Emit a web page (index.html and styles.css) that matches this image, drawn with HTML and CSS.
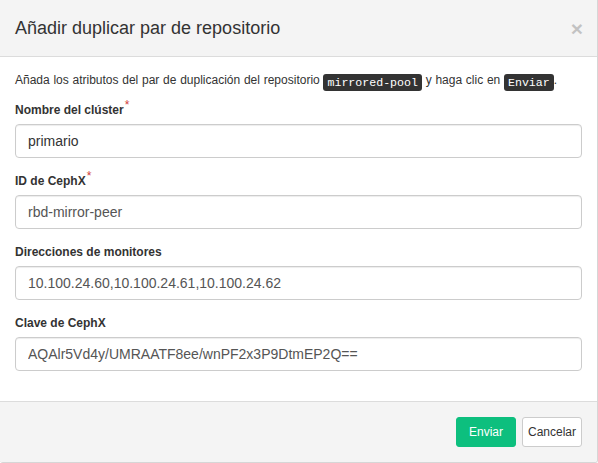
FILE: index.html
```html
<!DOCTYPE html>
<html lang="es">
<head>
<meta charset="utf-8">
<title>Añadir duplicar par de repositorio</title>
<link rel="stylesheet" href="styles.css">
</head>
<body>
<div class="modal">
  <div class="modal-header">
    <h4 class="modal-title">Añadir duplicar par de repositorio</h4>
    <button type="button" class="close" aria-label="Cerrar">×</button>
  </div>
  <form class="modal-body">
    <p class="intro">Añada los atributos del par de duplicación del repositorio <kbd>mirrored-pool</kbd> y haga clic en <kbd>Enviar</kbd>.</p>
    <div class="form-group">
      <label class="required">Nombre del clúster</label>
      <input class="form-control dark" type="text" value="primario">
    </div>
    <div class="form-group">
      <label class="required">ID de CephX</label>
      <input class="form-control" type="text" value="rbd-mirror-peer">
    </div>
    <div class="form-group">
      <label>Direcciones de monitores</label>
      <input class="form-control" type="text" value="10.100.24.60,10.100.24.61,10.100.24.62">
    </div>
    <div class="form-group">
      <label>Clave de CephX</label>
      <input class="form-control" type="text" value="AQAlr5Vd4y/UMRAATF8ee/wnPF2x3P9DtmEP2Q==">
    </div>
  </form>
  <div class="modal-footer">
    <button type="button" class="btn btn-primary">Enviar</button>
    <button type="button" class="btn btn-default">Cancelar</button>
  </div>
</div>
</body>
</html>
```
FILE: styles.css
```css
* { box-sizing: border-box; }
html, body { margin: 0; padding: 0; background: #fff; }
body {
  font-family: "Liberation Sans", Arial, Helvetica, sans-serif;
  font-size: 12px;
  line-height: 1.42857;
  color: #333;
}
.modal {
  width: 598px;
  height: 463px;
  display: flex;
  flex-direction: column;
  border-right: 1px solid #d6d6d6;
  border-bottom: 1px solid #d6d6d6;
  border-radius: 0 0 3px 3px;
  overflow: hidden;
}
.modal-header {
  background: #f4f4f4;
  border-bottom: 1px solid #dcdcdc;
  padding: 15px;
  display: flex;
  align-items: center;
  justify-content: space-between;
}
.modal-title {
  margin: 0;
  font-size: 18px;
  font-weight: normal;
  line-height: 26px;
  color: #333;
}
.close {
  background: none;
  border: 0;
  padding: 0;
  margin: 0 -1px 0 0;
  font-family: "Liberation Sans", Arial, sans-serif;
  font-size: 21px;
  font-weight: bold;
  line-height: 1;
  color: #000;
  opacity: .2;
  cursor: pointer;
}
.modal-body {
  margin: 0;
  padding: 15px;
  flex: 1;
}
.intro {
  margin: 0 0 11px;
  line-height: 17px;
  word-spacing: 0.4px;
}
kbd {
  display: inline-block;
  font-family: "Liberation Mono", "Courier New", monospace;
  font-size: 11.6px;
  line-height: 13px;
  padding: 2px 4px;
  color: #fff;
  background: #333;
  border-radius: 3px;
  vertical-align: -2px;
  word-spacing: 0;
}
.form-group { margin-bottom: 15px; }
.form-group:last-child { margin-bottom: 0; }
label {
  display: block;
  font-weight: bold;
  margin-bottom: 5px;
  line-height: 17px;
}
label.required::after {
  content: "*";
  color: #d0413b;
  font-weight: normal;
  font-size: 12px;
  position: relative;
  top: -5px;
  margin-left: 1px;
}
.form-control {
  display: block;
  width: 100%;
  height: 34px;
  padding: 6px 12px;
  font-family: "Liberation Sans", Arial, sans-serif;
  font-size: 14px;
  color: #555;
  background: #fff;
  border: 1px solid #ccc;
  border-radius: 4px;
  box-shadow: inset 0 1px 1px rgba(0,0,0,.075);
}
.form-control.dark { color: #333; }
.modal-footer {
  background: #f4f4f4;
  border-top: 1px solid #dcdcdc;
  padding: 15px;
  display: flex;
  justify-content: flex-end;
  gap: 6px;
}
.btn {
  min-width: 60px;
  height: 30px;
  padding: 0 5px;
  font-family: "Liberation Sans", Arial, sans-serif;
  font-size: 12px;
  border-radius: 3px;
  cursor: pointer;
}
.btn-primary {
  background: #0dbf7e;
  border: 1px solid #0dbf7e;
  color: #fff;
}
.btn-default {
  background: #fff;
  border: 1px solid #ccc;
  color: #333;
}
```
